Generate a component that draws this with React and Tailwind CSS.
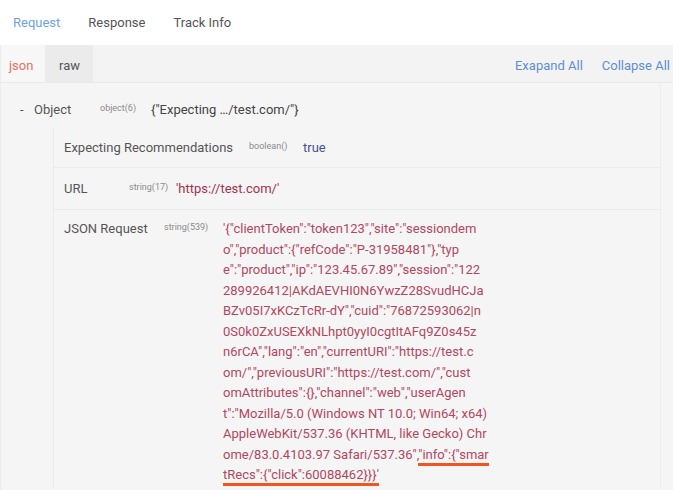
import React from 'react';

const font = { fontFamily: 'Roboto, "Noto Sans", sans-serif' };

const jsonLines = [
  `'{"clientToken":"token123","site":"sessiondem`,
  `o","product":{"refCode":"P-31958481"},"typ`,
  `e":"product","ip":"123.45.67.89","session":"122`,
  `289926412|AKdAEVHI0N6YwzZ28SvudHCJa`,
  `BZv05I7xKCzTcRr-dY","cuid":"76872593062|n`,
  `0S0k0ZxUSEXkNLhpt0yyI0cgtItAFq9Z0s45z`,
  `n6rCA","lang":"en","currentURI":"https://test.c`,
  `om/","previousURI":"https://test.com/","cust`,
  `omAttributes":{},"channel":"web","userAgen`,
  `t":"Mozilla/5.0 (Windows NT 10.0; Win64; x64)`,
  `AppleWebKit/537.36 (KHTML, like Gecko) Chr`,
];

const Type = ({ children }) => (
  <span className="text-[9px] text-[#8a8a8a] -translate-y-[3px] inline-block">{children}</span>
);

const App = () => {
  return (
    <div className="w-[673px] h-[490px] overflow-hidden bg-white text-[13px]" style={font}>
      {/* top tabs */}
      <div className="h-[45px] flex items-center gap-[28px] pl-[13px] pt-px">
        <span className="text-[#6fa3e0]">Request</span>
        <span className="text-[#555]">Response</span>
        <span className="text-[#555]">Track Info</span>
      </div>

      <div className="h-[445px] bg-[#f5f5f5] border-l border-[#ececec]">
        {/* json / raw strip */}
        <div className="h-[38px] flex items-stretch bg-[#f3f3f3] border-b border-[#e9e9e9]">
          <div className="w-[44px] flex items-center pl-[8px] pt-[5px] bg-[#f7f7f7] text-[#e8705c]">json</div>
          <div className="w-[48px] flex items-center pl-[14px] pt-[5px] bg-[#ebebeb] text-[#555]">raw</div>
          <div className="flex-1 flex items-center justify-end gap-[19px] pr-[3px] pt-[5px] text-[#5d8fd1]">
            <span>Exapand All</span>
            <span>Collapse All</span>
          </div>
        </div>

        {/* object tree */}
        <div className="h-[406px] border-r border-[#ececec] mr-[12px]">
          <div className="h-[44px] flex items-center pl-[19px] pt-[10px] text-[#555]">
            <span className="w-[14px]">-</span>
            <span className="w-[66px]">Object</span>
            <span className="w-[51px]"><Type>object(6)</Type></span>
            <span className="text-[#444]">{'{"Expecting …/test.com/"}'}</span>
          </div>

          <div className="ml-[52px] border-l border-[#ebebeb] h-[362px]">
            <div className="h-[41px] flex items-center pl-[10px] pt-[2px] border-b border-[#ebebeb] text-[#555]">
              <span className="w-[185px]">Expecting Recommendations</span>
              <span className="w-[54px]"><Type>boolean()</Type></span>
              <span className="text-[#4a4f98]">true</span>
            </div>
            <div className="h-[42px] flex items-center pl-[10px] border-b border-[#ebebeb] text-[#555]">
              <span className="w-[65px]">URL</span>
              <span className="w-[47px]"><Type>string(17)</Type></span>
              <span className="text-[#a3334f]">'https://test.com/'</span>
            </div>
            <div className="flex pl-[10px] pt-[9px] text-[#555]">
              <span className="w-[100px] leading-[20.5px]">JSON Request</span>
              <span className="w-[59px] leading-[20.5px]"><Type>string(539)</Type></span>
              <div className="text-[#b3475f] text-[13px] leading-[20.5px] whitespace-pre">
                {jsonLines.map((l, i) => (
                  <div key={i}>{l}</div>
                ))}
                <div>
                  {`ome/83.0.4103.97 Safari/537.36",`}
                  <span className="border-b-[3px] border-[#f0561d] pb-[1px]">{`"info":{"smar`}</span>
                </div>
                <div>
                  <span className="border-b-[3px] border-[#f0561d] pb-[1px]">{`tRecs":{"click":60088462}}}'`}</span>
                </div>
              </div>
            </div>
          </div>
        </div>
      </div>
    </div>
  );
};

export default App;
